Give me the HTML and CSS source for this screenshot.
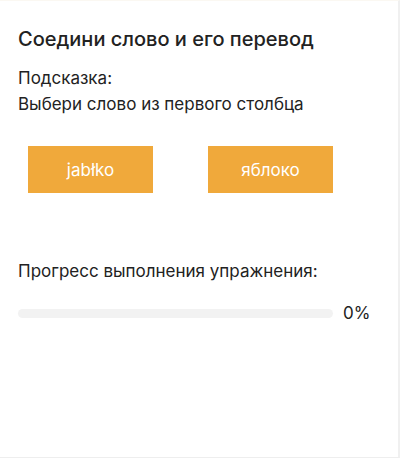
FILE: index.html
```html
<!DOCTYPE html>
<html lang="ru">
<head>
<meta charset="utf-8">
<link rel="stylesheet" href="styles.css">
</head>
<body>
<div class="panel">
  <h1 class="title">Соедини слово и его перевод</h1>
  <p class="hint">Подсказка:</p>
  <p class="hint-text">Выбери слово из первого столбца</p>
  <div class="pairs">
    <button class="word">jabłko</button>
    <button class="word">яблоко</button>
  </div>
  <p class="progress-label">Прогресс выполнения упражнения:</p>
  <div class="progress">
    <div class="track"><div class="fill" style="width:0%"></div></div>
    <span class="percent">0%</span>
  </div>
</div>
</body>
</html>
```
FILE: styles.css
```css
html, body {
  margin: 0;
  padding: 0;
  background: #fff;
}
body {
  font-family: Inter, "Liberation Sans", Arial, sans-serif;
  color: #222;
}
.panel {
  box-sizing: border-box;
  width: 400px;
  height: 458px;
  border-top: 1px solid #fbf8f2;
  border-right: 2px solid #f0f0f0;
  border-bottom: 1px solid #eeeeee;
  padding: 26px 18px 0 18px;
}
.title {
  margin: 0;
  font-size: 20px;
  font-weight: 500;
  line-height: 24px;
  color: #222;
}
.hint {
  margin: 17px 0 0;
  font-size: 17px;
  line-height: 20px;
}
.hint-text {
  margin: 6px 0 0;
  font-size: 17px;
  line-height: 20px;
}
.pairs {
  display: flex;
  gap: 55px;
  margin: 32px 0 0 10px;
}
.word {
  width: 125px;
  height: 47px;
  border: none;
  border-radius: 0;
  background: #f0a93b;
  color: #fff;
  font-family: inherit;
  font-size: 17px;
  padding: 0;
}
.progress-label {
  margin: 68px 0 0;
  font-size: 17px;
  line-height: 20px;
}
.progress {
  display: flex;
  align-items: center;
  gap: 10px;
  margin-top: 22px;
}
.track {
  width: 315px;
  height: 9px;
  border-radius: 5px;
  background: #f2f2f2;
  overflow: hidden;
}
.fill {
  height: 100%;
  background: #f0a93b;
}
.percent {
  font-size: 17px;
  line-height: 20px;
}
```
